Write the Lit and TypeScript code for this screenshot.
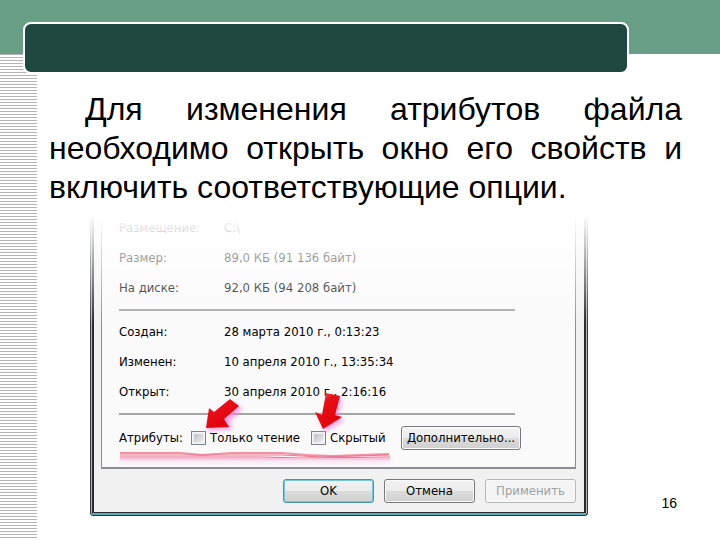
import { LitElement, html, css, svg } from "lit";
import { customElement } from "lit/decorators.js";

const sizeRows = [
  ["Размещение:", "C:\\"],
  ["Размер:", "89,0 КБ (91 136 байт)"],
  ["На диске:", "92,0 КБ (94 208 байт)"],
];

const dateRows = [
  ["Создан:", "28 марта 2010 г., 0:13:23"],
  ["Изменен:", "10 апреля 2010 г., 13:35:34"],
  ["Открыт:", "30 апреля 2010 г., 2:16:16"],
];

@customElement("file-properties")
class FileProperties extends LitElement {
  static styles = css`
    :host {
      display: block;
      font: 13px/30px "DejaVu Sans Condensed", "DejaVu Sans", sans-serif;
      color: #000;
    }
    * {
      box-sizing: border-box;
    }
    .frame {
      border: 1px solid #2c3a3e;
      border-top: 0;
      border-radius: 0 0 3px 3px;
      padding: 0 1px 2px;
      background: linear-gradient(#56b0bd, #56b0bd) bottom / 100% 2px no-repeat #b4b8ba;
      mask-image: linear-gradient(transparent 2px, #000 112px);
    }
    .body {
      border: solid #2b2b2e;
      border-width: 0 2px 1px;
      background: #f1f1f2;
      padding: 0 8px 9px 7px;
    }
    .panel {
      position: relative;
      border: solid #8b8d90;
      border-width: 0 1px 2px;
      background: #fafafa;
      padding: 0 60px 14px 17px;
    }
    table {
      border-collapse: collapse;
      width: 100%;
    }
    th,
    td {
      padding: 0;
      height: 30px;
      text-align: left;
      font-weight: normal;
      white-space: nowrap;
    }
    th {
      width: 105px;
    }
    hr {
      border: 0;
      height: 2px;
      margin: 6px 0;
      background: #a5a7a7;
    }
    .attributes {
      display: flex;
      align-items: center;
      height: 30px;
      margin: 8px -6px 0 0;
      white-space: nowrap;
    }
    .caption {
      width: 72px;
    }
    .option {
      display: flex;
      align-items: center;
      gap: 4px;
      width: 120px;
    }
    .option + .option {
      width: 90px;
    }
    input {
      appearance: none;
      flex: none;
      width: 15px;
      height: 14px;
      margin: 0;
      border: 1px solid #7f8488;
      background: linear-gradient(135deg, #b4b9c0, #f4f5f6);
      box-shadow: inset 0 0 0 2px #f0f1f2;
    }
    button {
      height: 24px;
      padding: 0;
      border: 1px solid #77797b;
      border-radius: 3px;
      background: linear-gradient(#f3f3f3, #ebebeb 50%, #dcdcdc 50%, #cfcfcf);
      box-shadow: inset 0 0 0 1px #fafafa;
      font: inherit;
      line-height: 20px;
      color: #000;
    }
    .more {
      flex: 1;
    }
    .actions {
      display: flex;
      justify-content: flex-end;
      gap: 10px;
      margin-top: 10px;
    }
    .actions button {
      width: 91px;
    }
    .actions .ok {
      border-color: #4b93a6;
      box-shadow: inset 0 0 0 1px #77c8d8;
    }
    .actions button:disabled {
      border-color: #b5b7b8;
      background: #f4f4f4;
      color: #a0a2a3;
    }
    .marks {
      position: absolute;
      left: 0;
      bottom: 0;
      width: 300px;
      height: 84px;
      pointer-events: none;
    }
  `;

  private rows(rows: string[][]) {
    return html`<table>
      ${rows.map(([k, v]) => html`<tr><th scope="row">${k}</th><td>${v}</td></tr>`)}
    </table>`;
  }

  private marks() {
    return svg`
      <defs>
        <filter id="glow" x="-30%" y="-30%" width="160%" height="160%">
          <feGaussianBlur stdDeviation="2"></feGaussianBlur>
        </filter>
        <linearGradient id="red" x1="0" y1="0" x2="0.6" y2="1">
          <stop offset="0" stop-color="#f08080"></stop>
          <stop offset="0.35" stop-color="#e81018"></stop>
          <stop offset="1" stop-color="#e00008"></stop>
        </linearGradient>
      </defs>
      <g fill="#ff7ad8" opacity="0.7" filter="url(#glow)">
        <path d="M105 48 109 28 114 32 130 19 140 26 128 38 130 46Z"></path>
        <path d="M223 49 215 31 222 34 226 13 240 16 236 34 242 37Z"></path>
        <path d="M18 75H288V79H18Z" opacity="0.35"></path>
      </g>
      <g fill="url(#red)">
        <path d="M104 45 107 25 112 29 128 16 137 23 122 36 127 44Z"></path>
        <path d="M221 46 213 29 220 32 224 10 238 13 233 32 240 34Z"></path>
      </g>
      <g fill="none" stroke-width="2">
        <path d="M18 70H78L100 72 130 70H180L205 72 230 73 287 71" stroke="#f590a4"></path>
        <path d="M18 72H100L180 72 220 74 287 72" stroke="#e8798e" stroke-width="1"></path>
        <path d="M18 74H160L200 75 288 74" stroke="#ee6f8c" stroke-width="1"></path>
        <path d="M18 76H288" stroke="#ffc4dc"></path>
      </g>`;
  }

  render() {
    return html`
      <div class="frame">
        <div class="body">
          <div class="panel">
            ${this.rows(sizeRows)}
            <hr />
            ${this.rows(dateRows)}
            <hr />
            <div class="attributes">
              <span class="caption">Атрибуты:</span>
              <label class="option"><input type="checkbox" />Только чтение</label>
              <label class="option"><input type="checkbox" />Скрытый</label>
              <button class="more" type="button">Дополнительно...</button>
            </div>
            <svg class="marks" viewBox="0 0 300 84" aria-hidden="true">${this.marks()}</svg>
          </div>
          <div class="actions">
            <button class="ok" type="button">OK</button>
            <button type="button">Отмена</button>
            <button type="button" disabled>Применить</button>
          </div>
        </div>
      </div>
    `;
  }
}

@customElement("app-root")
class AppRoot extends LitElement {
  static styles = css`
    :host {
      display: grid;
      grid-template: 54px 1fr / 37px 1fr;
      min-height: 100vh;
      background: #fff;
      color: #000;
      font-family: "Liberation Sans", sans-serif;
    }
    * {
      box-sizing: border-box;
    }
    header {
      grid-column: 1 / -1;
      padding: 22px 91px 0 23px;
      background: #689f86;
    }
    .title {
      position: relative;
      height: 52px;
      border: 2px solid #fff;
      border-radius: 8px;
      background: #1f4940;
    }
    .stripes {
      background: repeating-linear-gradient(#b4b4b6 0 1px, #fff 1px 3px);
    }
    main {
      padding: 36px 38px 24px 12px;
    }
    p {
      margin: 0;
      font-size: 32px;
      line-height: 39px;
      text-indent: 36px;
      text-align: justify;
    }
    .figure {
      display: flex;
      align-items: flex-end;
      justify-content: space-between;
      margin: 6px 0 0 41px;
    }
    file-properties {
      flex: 0 1 498px;
    }
    .number {
      margin: 0 5px 4px 0;
      font-size: 14px;
      line-height: 18px;
    }
  `;

  render() {
    return html`
      <header><div class="title"></div></header>
      <div class="stripes"></div>
      <main>
        <p>
          Для изменения атрибутов файла необходимо открыть окно его свойств и
          включить соответствующие опции.
        </p>
        <div class="figure">
          <file-properties></file-properties>
          <span class="number">16</span>
        </div>
      </main>
    `;
  }
}
